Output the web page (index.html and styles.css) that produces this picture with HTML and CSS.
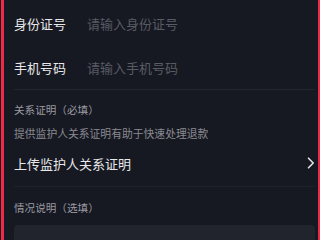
FILE: index.html
```html
<!DOCTYPE html>
<html lang="zh-CN">
<head>
<meta charset="utf-8">
<link rel="stylesheet" href="styles.css">
</head>
<body>
<div class="frame">
  <div class="row">
    <span class="label">身份证号</span>
    <span class="placeholder">请输入身份证号</span>
  </div>
  <div class="row row-line">
    <span class="label">手机号码</span>
    <span class="placeholder">请输入手机号码</span>
  </div>
  <div class="sec-title">关系证明（必填）</div>
  <div class="sec-desc">提供监护人关系证明有助于快速处理退款</div>
  <div class="upload">
    <span class="label">上传监护人关系证明</span>
    <svg class="chev" width="8" height="12" viewBox="0 0 8 12"><path d="M1.5 1.2 L6.2 6 L1.5 10.8" fill="none" stroke="#e4e4e6" stroke-width="1.6" stroke-linecap="round" stroke-linejoin="round"/></svg>
  </div>
  <div class="sec-title sec-title2">情况说明（选填）</div>
  <div class="textbox"></div>
</div>
</body>
</html>
```
FILE: styles.css
```css
html, body {
  margin: 0;
  padding: 0;
  background: #161822;
  height: 240px;
  overflow: hidden;
}
body {
  font-family: "Noto Sans CJK SC", "Noto Sans", sans-serif;
}
.frame {
  margin-left: 1px;
  width: 304px;
  height: 240px;
  overflow: hidden;
  border-left: 3px solid #ee2a46;
  border-right: 5px solid #ee2a46;
  padding-left: 10px;
  box-sizing: content-box;
}
.frame > * {
  margin-right: 3px;
}
.row {
  display: flex;
  align-items: center;
  height: 46px;
  font-size: 13px;
}
.row-line {
  height: 43px;
  border-bottom: 1px solid #23252e;
}
.label {
  color: #e8e8ea;
  font-size: 13px;
  width: 73px;
  flex: none;
}
.placeholder {
  color: #595b63;
  font-size: 13px;
}
.sec-title {
  padding-top: 13px;
  font-size: 10.6px;
  line-height: 14px;
  color: #9a9ba1;
}
.sec-desc {
  margin-top: 9px;
  font-size: 10.8px;
  line-height: 14px;
  color: #8a8b91;
}
.upload {
  display: flex;
  align-items: center;
  justify-content: space-between;
  height: 46px;
  border-bottom: 1px solid #1f212a;
}
.upload .label {
  width: auto;
}
.sec-title2 {
  padding-top: 14px;
}
.textbox {
  margin-top: 10px;
  height: 30px;
  background: #22242d;
  border-radius: 4px;
}
```
